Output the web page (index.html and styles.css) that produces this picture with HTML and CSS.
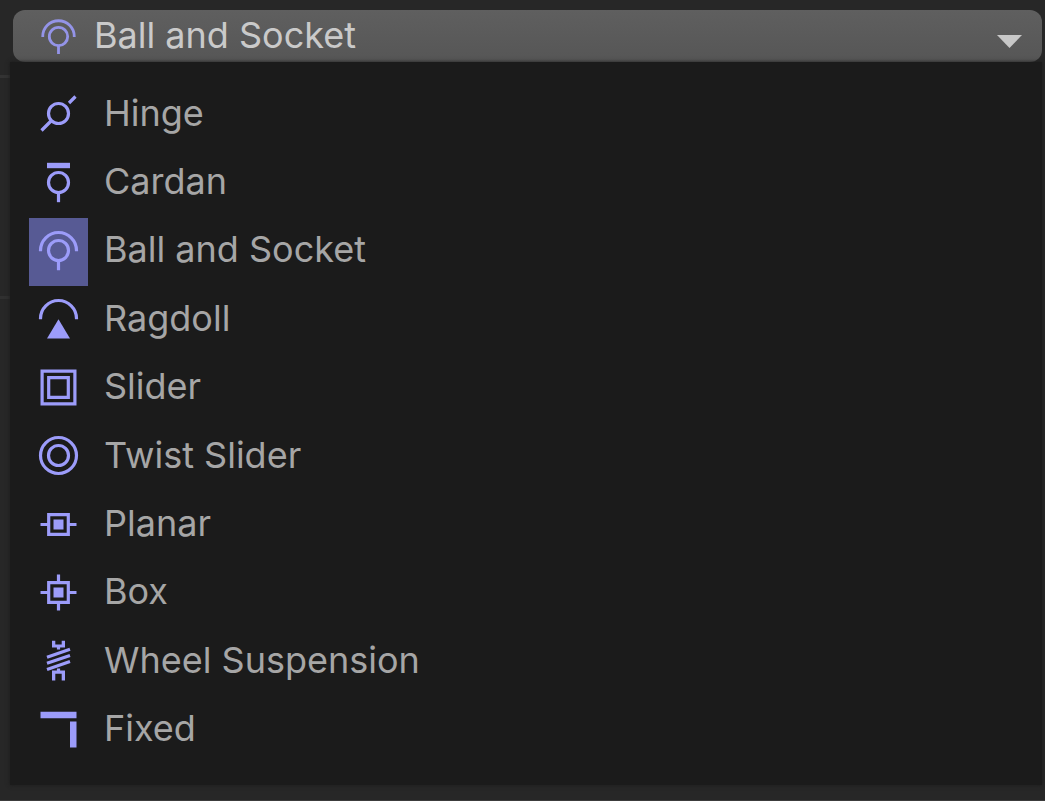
FILE: index.html
```html
<!DOCTYPE html>
<html lang="en">
<head>
<meta charset="utf-8">
<meta name="viewport" content="width=device-width, initial-scale=1">
<title>Joint type</title>
<link rel="stylesheet" href="styles.css">
</head>
<body>
<main class="picker">
  <button class="trigger" type="button" aria-haspopup="listbox" aria-expanded="true" aria-controls="joints">
    <span class="trigger-icon"><svg class="icon icon-small" viewBox="-20 -20 40 40" aria-hidden="true"><circle r="10.5"/><path d="M-18 .7V0A18 18 0 0 1 18 0V.7M0 10V20"/></svg></span>
    <span class="trigger-label">Ball and Socket</span>
    <svg class="arrow" viewBox="0 0 25 13" aria-hidden="true"><path d="M0 0H25L12.5 13Z"/></svg>
  </button>
  <div class="menu" id="joints" role="listbox" aria-label="Joint type">
    <button class="option" type="button" role="option" aria-selected="false">
      <span class="option-icon"><svg class="icon" viewBox="-19.5 -19.5 39 39" aria-hidden="true"><circle r="10"/><path d="M-17 17L-7 7M10.5 -10.5L17 -17"/></svg></span>
      <span class="option-label">Hinge</span>
    </button>
    <button class="option" type="button" role="option" aria-selected="false">
      <span class="option-icon"><svg class="icon" viewBox="-19.5 -19.5 39 39" aria-hidden="true"><circle r="10"/><path d="M0 10V19.7"/><path class="solid" d="M-11.5 -19.7H11.5V-14.3H-11.5Z"/></svg></span>
      <span class="option-label">Cardan</span>
    </button>
    <button class="option" type="button" role="option" aria-selected="true">
      <span class="option-icon"><svg class="icon" viewBox="-19.5 -19.5 39 39" aria-hidden="true"><circle r="10"/><path d="M-18 .7V0A18 18 0 0 1 18 0V.7M0 10V19.7"/></svg></span>
      <span class="option-label">Ball and Socket</span>
    </button>
    <button class="option" type="button" role="option" aria-selected="false">
      <span class="option-icon"><svg class="icon" viewBox="-19.5 -19.5 39 39" aria-hidden="true"><path d="M-18 .7V0A18 18 0 0 1 18 0V.7"/><path class="solid" d="M0 .8L11.5 20H-11.5Z"/></svg></span>
      <span class="option-label">Ragdoll</span>
    </button>
    <button class="option" type="button" role="option" aria-selected="false">
      <span class="option-icon"><svg class="icon" viewBox="-19.5 -19.5 39 39" aria-hidden="true"><path d="M-16.4 -16.4H16.4V16.4H-16.4ZM-9.8 -9.8H9.8V9.8H-9.8Z"/></svg></span>
      <span class="option-label">Slider</span>
    </button>
    <button class="option" type="button" role="option" aria-selected="false">
      <span class="option-icon"><svg class="icon" viewBox="-19.5 -19.5 39 39" aria-hidden="true"><circle r="18"/><circle r="10"/></svg></span>
      <span class="option-label">Twist Slider</span>
    </button>
    <button class="option" type="button" role="option" aria-selected="false">
      <span class="option-icon"><svg class="icon" viewBox="-19.5 -19.5 39 39" aria-hidden="true"><path d="M-9.8 -9.8H9.8V9.8H-9.8ZM-18 0H-11M11 0H18"/><path class="solid" d="M-5 -5H5V5H-5Z"/></svg></span>
      <span class="option-label">Planar</span>
    </button>
    <button class="option" type="button" role="option" aria-selected="false">
      <span class="option-icon"><svg class="icon" viewBox="-19.5 -19.5 39 39" aria-hidden="true"><path d="M-9.8 -9.8H9.8V9.8H-9.8ZM-18 0H-11M11 0H18M0 -18V-11M0 11V18"/><path class="solid" d="M-5 -5H5V5H-5Z"/></svg></span>
      <span class="option-label">Box</span>
    </button>
    <button class="option" type="button" role="option" aria-selected="false">
      <span class="option-icon"><svg class="icon" viewBox="-19.5 -19.5 39 39" aria-hidden="true"><path class="solid" d="M-6.5 -19.7H-3.2V-16H3.2V-19.7H6.5V-13H1.6V-11H-1.6V-13H-6.5ZM-6.5 20V10H-1.6V8H1.6V10H6.5V20H3.2V13.3H-3.2V20Z"/><path d="M-11.5 -3.3L11.5 -11.3M-11.5 2.7L11.5 -5.1M-11.5 8.9L11.5 1"/></svg></span>
      <span class="option-label">Wheel Suspension</span>
    </button>
    <button class="option" type="button" role="option" aria-selected="false">
      <span class="option-icon"><svg class="icon" viewBox="-19.5 -19.5 39 39" aria-hidden="true"><path class="solid" d="M-18 -17.7H18V-11.3H-18ZM11.5 -8H18V18H11.5Z"/></svg></span>
      <span class="option-label">Fixed</span>
    </button>
  </div>
</main>
</body>
</html>
```

FILE: styles.css
```css
* {
  box-sizing: border-box;
}

body {
  margin: 0;
  color: #a6a6a6;
  font-family: Inter, "Liberation Sans", sans-serif;
  font-size: 36px;
  line-height: 44px;
  background:
    linear-gradient(#333, #333) 0 75px / 10px 3px no-repeat,
    linear-gradient(#303030, #303030) 0 296px / 10px 3px no-repeat,
    #272727;
}

.picker {
  display: flex;
  flex-direction: column;
  min-height: 100vh;
  padding: 10px 3px 15px 10px;
  border-bottom: 1px solid #3c3c3c;
}

button {
  border: 0;
  margin: 0;
  padding: 0;
  color: inherit;
  font: inherit;
  text-align: left;
  background: none;
}

.trigger {
  display: flex;
  align-items: center;
  height: 52px;
  margin-left: 3px;
  padding: 0 20px 0 16px;
  border-radius: 12px;
  color: #cacaca;
  background: linear-gradient(#5f5f5f, #565656);
}

.trigger-icon {
  display: flex;
  justify-content: center;
  width: 59px;
}

.trigger-label {
  flex: 1;
  padding: 0 0 3px 6px;
}

.arrow {
  width: 25px;
  height: 13px;
  margin-top: 11px;
  fill: #c8c8c8;
}

.menu {
  flex: 1;
  display: grid;
  grid-auto-rows: 1fr;
  padding: 19px 19px 20px;
  background: #1b1b1b;
  box-shadow: 0 0 4px #1b1b1b;
}

.option {
  display: flex;
}

.option-icon {
  display: flex;
  align-items: center;
  justify-content: center;
  width: 59px;
  padding-bottom: 3px;
}

.option[aria-selected="true"] .option-icon {
  background: #575a94;
}

.option-label {
  align-self: center;
  padding: 0 0 5px 16px;
}

.icon {
  width: 39px;
  height: 39px;
  overflow: visible;
  fill: none;
  stroke: #9c9cfa;
  stroke-width: 3.2;
}

.icon-small {
  width: 35px;
  height: 35px;
  stroke: #9494e8;
}

.solid {
  fill: #9c9cfa;
  stroke: none;
}
```
